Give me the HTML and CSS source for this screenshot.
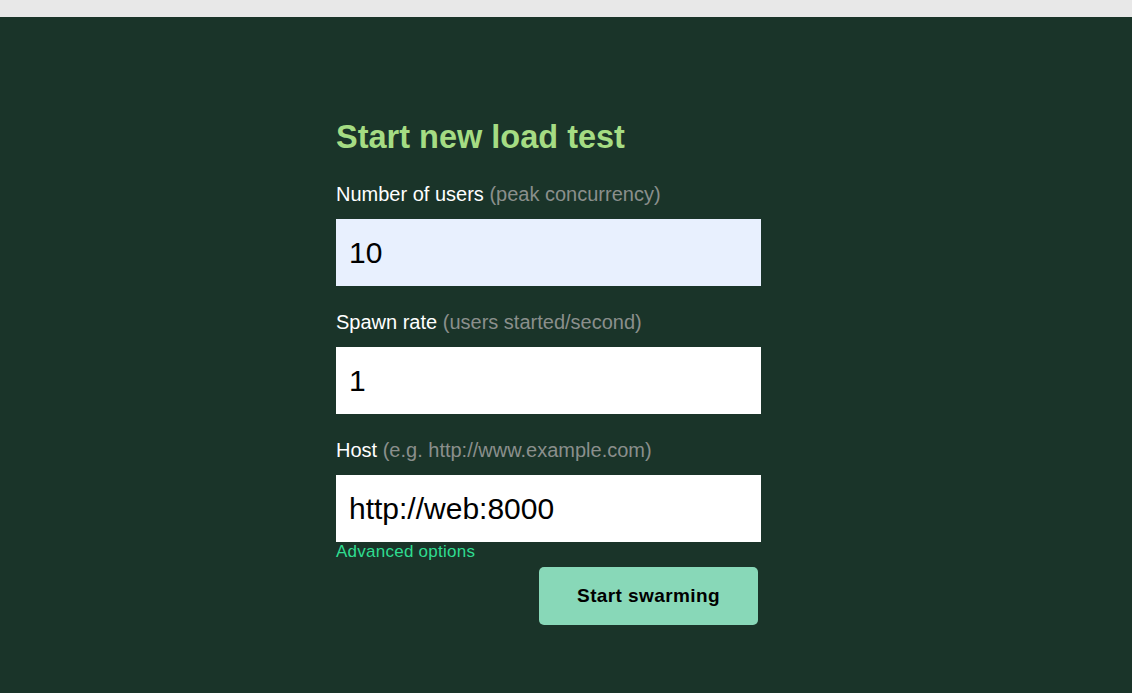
FILE: index.html
```html
<!DOCTYPE html>
<html lang="en">
<head>
<meta charset="utf-8">
<title>Locust</title>
<link rel="stylesheet" href="styles.css">
</head>
<body>
<div class="topbar"></div>
<main class="page">
  <form class="form">
    <h2 class="title">Start new load test</h2>
    <label class="label" for="users">Number of users <span class="hint">(peak concurrency)</span></label>
    <input class="input autofill" id="users" type="text" value="10">
    <label class="label" for="rate">Spawn rate <span class="hint">(users started/second)</span></label>
    <input class="input" id="rate" type="text" value="1">
    <label class="label" for="host">Host <span class="hint">(e.g. http://www.example.com)</span></label>
    <input class="input last" id="host" type="text" value="http://web:8000">
    <a class="advanced" href="#">Advanced options</a>
    <div class="actions">
      <button class="btn" type="button">Start swarming</button>
    </div>
  </form>
</main>
</body>
</html>
```

FILE: styles.css
```css
html, body {
  margin: 0;
  padding: 0;
  height: 100%;
}
body {
  background: #1a3429;
  font-family: "Liberation Sans", Arial, sans-serif;
  display: flex;
  flex-direction: column;
}
.topbar {
  height: 17px;
  background: #e8e8e8;
  flex: none;
}
.page {
  flex: 1;
  display: flex;
  justify-content: flex-start;
  padding-left: 336px;
  padding-top: 102px;
}
.form {
  width: 425px;
  display: flex;
  flex-direction: column;
}
.title {
  margin: 0 0 27px;
  font-size: 32.5px;
  font-weight: bold;
  color: #a5dc83;
  line-height: normal;
}
.label {
  font-size: 20px;
  color: #ffffff;
  margin-bottom: 13px;
  line-height: normal;
}
.hint {
  color: #8a8f8c;
}
.input {
  box-sizing: border-box;
  height: 67px;
  width: 425px;
  border: none;
  outline: none;
  background: #ffffff;
  color: #000;
  font-family: "Liberation Sans", Arial, sans-serif;
  font-size: 30px;
  padding: 0 13px;
  margin: 0 0 25px;
}
.input.autofill {
  background: #e8f0fe;
}
.input.last {
  margin-bottom: 0;
}
.advanced {
  font-size: 17px;
  letter-spacing: 0.25px;
  color: #2fdc90;
  text-decoration: none;
  line-height: normal;
  align-self: flex-start;
}
.actions {
  display: flex;
  justify-content: flex-end;
  margin-top: 5px;
  padding-right: 3px;
}
.btn {
  width: 219px;
  height: 58px;
  border: none;
  border-radius: 5px;
  background: #88d8b8;
  color: #000;
  font-family: "Liberation Sans", Arial, sans-serif;
  font-size: 19px;
  letter-spacing: 0.4px;
  font-weight: bold;
  cursor: pointer;
}
```
